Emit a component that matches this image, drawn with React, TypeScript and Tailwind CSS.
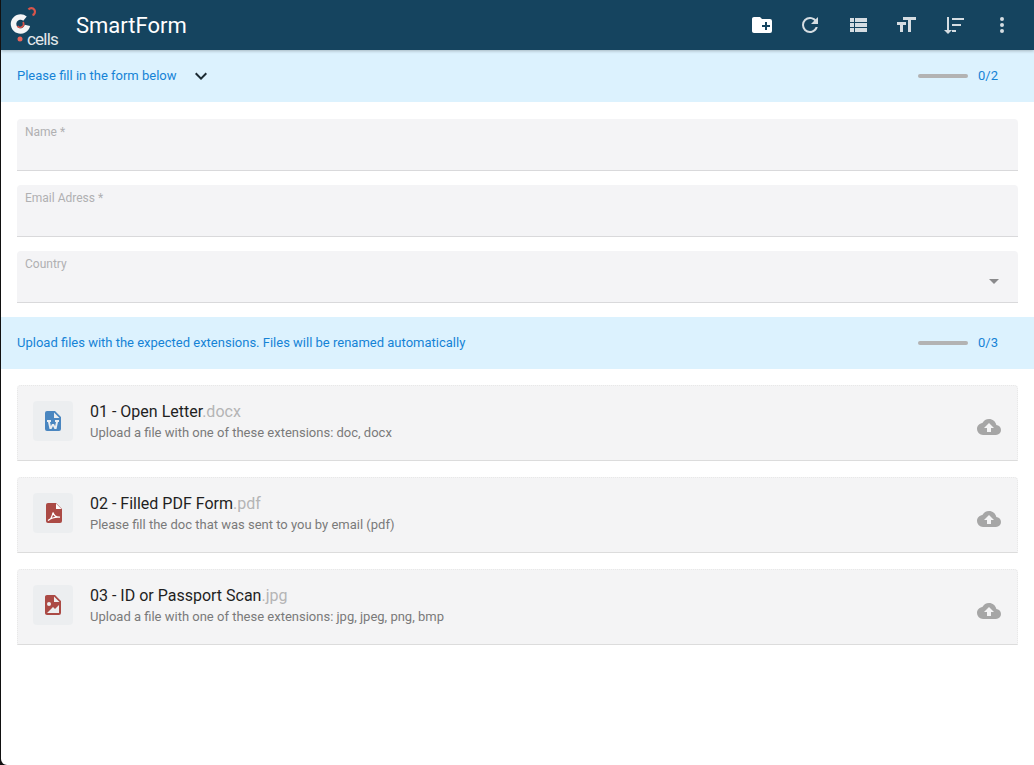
const font = { fontFamily: "Roboto, sans-serif" };

function Icon({ d, className }: { d: string; className: string }) {
  return (
    <svg viewBox="0 0 24 24" className={className} fill="currentColor">
      <path d={d} fillRule="evenodd" />
    </svg>
  );
}

const icons = {
  folderPlus:
    "M10,4L12,6H20A2,2 0 0,1 22,8V18A2,2 0 0,1 20,20H4C2.89,20 2,19.1 2,18V6C2,4.89 2.89,4 4,4H10M15,9V12H12V14H15V17H17V14H20V12H17V9H15Z",
  refresh:
    "M17.65,6.35C16.2,4.9 14.21,4 12,4A8,8 0 0,0 4,12A8,8 0 0,0 12,20C15.73,20 18.84,17.45 19.73,14H17.65C16.83,16.33 14.61,18 12,18A6,6 0 0,1 6,12A6,6 0 0,1 12,6C13.66,6 15.14,6.69 16.22,7.78L13,11H20V4L17.65,6.35Z",
  list: "M9,5V9H21V5M9,19H21V15H9M9,14H21V10H9M4,9H8V5H4M4,19H8V15H4M4,14H8V10H4V14Z",
  size: "M3,12H6V19H9V12H12V9H3M9,4V7H14V19H17V7H22V4H9Z",
  sort: "M5 4H7V17H10L6 21L2 17H5V4ZM10 5H22V7H10V5ZM10 11H19V13H10V11ZM10 17H14V19H10V17Z",
  dots: "M12,16A2,2 0 0,1 14,18A2,2 0 0,1 12,20A2,2 0 0,1 10,18A2,2 0 0,1 12,16M12,10A2,2 0 0,1 14,12A2,2 0 0,1 12,14A2,2 0 0,1 10,12A2,2 0 0,1 12,10M12,4A2,2 0 0,1 14,6A2,2 0 0,1 12,8A2,2 0 0,1 10,6A2,2 0 0,1 12,4Z",
  upload:
    "M14,13V17H10V13H7L12,8L17,13H14M19.35,10.03C18.67,6.59 15.64,4 12,4C9.11,4 6.6,5.64 5.35,8.03C2.34,8.36 0,10.9 0,14A6,6 0 0,0 6,20H19A5,5 0 0,0 24,15C24,12.36 21.95,10.22 19.35,10.03Z",
  chevron: "M7.41,8.58L12,13.17L16.59,8.58L18,10L12,16L6,10L7.41,8.58Z",
  word: "M6,2H14L20,8V20A2,2 0 0,1 18,22H6A2,2 0 0,1 4,20V4A2,2 0 0,1 6,2M13,3.5V9H18.5L13,3.5M7,13L8.5,20H10.5L12,17L13.5,20H15.5L17,13H18V11H14V13H15L14.1,17.2L13,15H11L9.9,17.2L9,13H10V11H6V13H7Z",
  image:
    "M13,9H18.5L13,3.5V9M6,2H14L20,8V20A2,2 0 0,1 18,22H6C4.89,22 4,21.1 4,20V4C4,2.89 4.89,2 6,2M6,20H18V12L14,16L12,14L6,20M8,9A2,2 0 0,0 6,11A2,2 0 0,0 8,13A2,2 0 0,0 10,11A2,2 0 0,0 8,9Z",
};

function Logo() {
  return (
    <div className="relative w-[52px] h-[44px] shrink-0">
      <svg viewBox="0 0 52 44" className="absolute inset-0 w-full h-full">
        <path d="M16 15.6A7 7 0 1 0 18.4 22.4" fill="none" stroke="#f4f5f6" strokeWidth="5.5" />
        <path d="M8.5 23a3.4 3.4 0 0 0 5.5-4" fill="none" stroke="#d8554b" strokeWidth="1.8" />
        <path d="M19.5 6.5a3.6 3.6 0 1 1 4 5.6" fill="none" stroke="#d8554b" strokeWidth="2.2" />
        <circle cx="11" cy="36" r="2.5" fill="#e8635a" />
      </svg>
      <span className="absolute left-[18px] top-[28px] text-[17px] leading-[16px] tracking-[-0.8px] text-[#e3e8eb]">cells</span>
    </div>
  );
}

function Banner({ text, count, chevron }: { text: string; count: string; chevron?: boolean }) {
  return (
    <div className="h-[52px] bg-[#dcf2fe] pl-[16px] pr-[36px] flex items-center text-[13px] text-[#1583d6]">
      <span>{text}</span>
      {chevron && <Icon d={icons.chevron} className="w-[24px] h-[24px] ml-[12px] text-[#1c2b33]" />}
      <div className="ml-auto w-[50px] h-[4px] rounded-full bg-[#b3b3b3]" />
      <span className="ml-[10px] w-[20px]">{count}</span>
    </div>
  );
}

function Field({ label, select }: { label: string; select?: boolean }) {
  return (
    <div className="relative h-[52px] rounded-t-[4px] bg-[#f4f4f6] border-b border-[#d9d9db] px-[8px] pt-[6px]">
      <div className="text-[12px] leading-[14px] text-[#b0b0b2]">{label}</div>
      {select && <div className="absolute right-[19px] top-[28px] border-x-[5px] border-x-transparent border-t-[5px] border-t-[#8a8a8c]" />}
    </div>
  );
}

function FileIcon({ color, d }: { color: string; d?: string }) {
  return (
    <div className="w-[40px] h-[40px] rounded-[4px] bg-[#eceef0] flex items-center justify-center">
      {d ? (
        <svg viewBox="0 0 24 24" className="w-[24px] h-[24px]" fill={color}>
          <path d={d} fillRule="evenodd" />
        </svg>
      ) : (
        <svg viewBox="0 0 24 24" className="w-[24px] h-[24px] ml-[2px]">
          <path d="M6,2H14L20,8V20A2,2 0 0,1 18,22H6A2,2 0 0,1 4,20V4A2,2 0 0,1 6,2Z" fill={color} />
          <path d="M14,2.5V8H19.5Z" fill="#fff" />
          <path d="M6 19.5C8 18.8 10.2 15.6 11 11.5C11.8 14.5 14 16.4 18 16.2C14.5 15.8 10 16.4 6 19.5Z" fill="none" stroke="#fff" strokeWidth="1.2" />
        </svg>
      )}
    </div>
  );
}

function FileRow({
  title,
  ext,
  hint,
  icon,
}: {
  title: string;
  ext: string;
  hint: string;
  icon: React.ReactNode;
}) {
  return (
    <div className="h-[76px] rounded-t-[4px] bg-[#f4f4f5] border-x border-t border-b border-dotted border-[#e8e8e8] border-b-[#dcdcdc] [border-bottom-style:solid] pl-[15px] pr-[16px] flex">
      <div className="pt-[15px]">{icon}</div>
      <div className="ml-[17px] pt-[15px]">
        <div className="text-[16px] leading-[22px] text-[#1f1f1f]">
          {title}
          <span className="text-[#b5b5b5]">{ext}</span>
        </div>
        <div className="text-[13px] leading-[20px] text-[#7a7a7a]">{hint}</div>
      </div>
      <div className="ml-auto pt-[29px]">
        <Icon d={icons.upload} className="w-[24px] h-[24px] text-[#a6a6a6]" />
      </div>
    </div>
  );
}

export default function App() {
  return (
    <div className="h-[765px] bg-[#111] pl-[1px]" style={font}>
      <div className="h-full bg-white rounded-bl-[6px] overflow-hidden">
        <header className="relative z-10 h-[50px] bg-[#15445f] flex items-center pl-[8px] pr-[20px] shadow-[0_1px_3px_rgba(0,0,0,0.25)]">
          <Logo />
          <div className="ml-[15px] text-[22px] text-white">SmartForm</div>
          <div className="ml-auto flex items-center gap-[24px] text-[#d5dde2]">
            <Icon d={icons.folderPlus} className="w-[24px] h-[24px] text-white" />
            <Icon d={icons.refresh} className="w-[24px] h-[24px]" />
            <Icon d={icons.list} className="w-[24px] h-[24px]" />
            <Icon d={icons.size} className="w-[24px] h-[24px]" />
            <Icon d={icons.sort} className="w-[24px] h-[24px]" />
            <Icon d={icons.dots} className="w-[24px] h-[24px]" />
          </div>
        </header>
        <Banner text="Please fill in the form below" count="0/2" chevron />
        <div className="px-[16px] pt-[17px] flex flex-col gap-[14px]">
          <Field label="Name *" />
          <Field label="Email Adress *" />
          <Field label="Country" select />
        </div>
        <div className="mt-[14px]">
          <Banner text="Upload files with the expected extensions. Files will be renamed automatically" count="0/3" />
        </div>
        <div className="px-[16px] pt-[16px] flex flex-col gap-[16px]">
          <FileRow title="01 - Open Letter" ext=".docx" hint="Upload a file with one of these extensions: doc, docx" icon={<FileIcon color="#4a86c0" d={icons.word} />} />
          <FileRow title="02 - Filled PDF Form" ext=".pdf" hint="Please fill the doc that was sent to you by email (pdf)" icon={<FileIcon color="#ab4a45" />} />
          <FileRow title="03 - ID or Passport Scan" ext=".jpg" hint="Upload a file with one of these extensions: jpg, jpeg, png, bmp" icon={<FileIcon color="#ab4a45" d={icons.image} />} />
        </div>
      </div>
    </div>
  );
}
